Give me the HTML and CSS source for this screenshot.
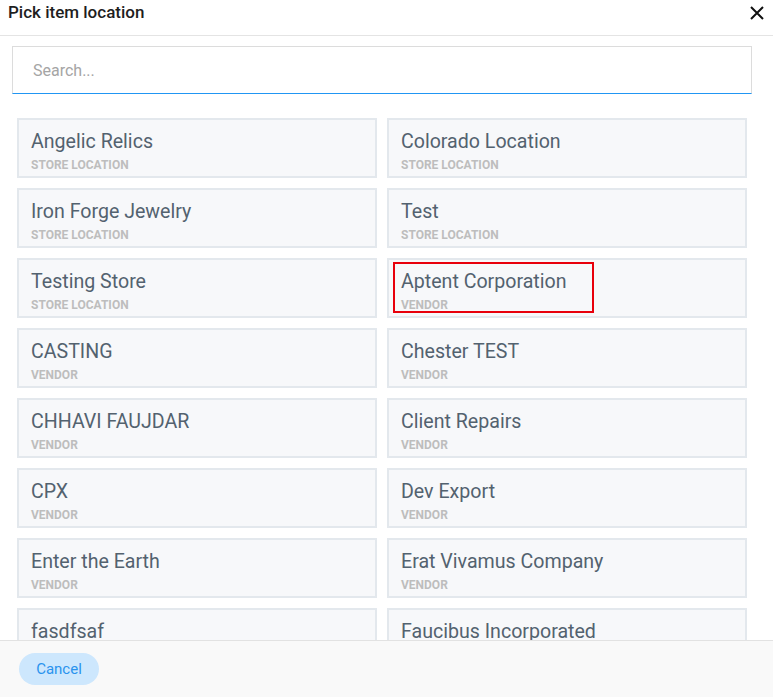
FILE: index.html
```html
<!DOCTYPE html>
<html lang="en">
<head>
    <meta charset="UTF-8">
    <meta name="viewport" content="width=device-width, initial-scale=1.0">
    <title>Pick item location</title>
    <link rel="stylesheet" href="styles.css">
</head>
<body>
<div class="dialog">
    <div class="dialog-header">
        <h2>Pick item location</h2>
        <button class="close" title="Close">
            <svg width="14" height="14" viewBox="0 0 14 14"><path d="M1 1L13 13M13 1L1 13" stroke="#111" stroke-width="2" fill="none"/></svg>
        </button>
    </div>
    <div class="search-wrap">
        <input class="search" type="text" placeholder="Search..." autofocus>
    </div>
    <div class="locations">
        <div class="loc"><div class="name">Angelic Relics</div><div class="kind">Store location</div></div>
        <div class="loc"><div class="name">Colorado Location</div><div class="kind">Store location</div></div>
        <div class="loc"><div class="name">Iron Forge Jewelry</div><div class="kind">Store location</div></div>
        <div class="loc"><div class="name">Test</div><div class="kind">Store location</div></div>
        <div class="loc"><div class="name">Testing Store</div><div class="kind">Store location</div></div>
        <div class="loc marked"><div class="name">Aptent Corporation</div><div class="kind">Vendor</div><span class="mark"></span></div>
        <div class="loc"><div class="name">CASTING</div><div class="kind">Vendor</div></div>
        <div class="loc"><div class="name">Chester TEST</div><div class="kind">Vendor</div></div>
        <div class="loc"><div class="name">CHHAVI FAUJDAR</div><div class="kind">Vendor</div></div>
        <div class="loc"><div class="name">Client Repairs</div><div class="kind">Vendor</div></div>
        <div class="loc"><div class="name">CPX</div><div class="kind">Vendor</div></div>
        <div class="loc"><div class="name">Dev Export</div><div class="kind">Vendor</div></div>
        <div class="loc"><div class="name">Enter the Earth</div><div class="kind">Vendor</div></div>
        <div class="loc"><div class="name">Erat Vivamus Company</div><div class="kind">Vendor</div></div>
        <div class="loc"><div class="name">fasdfsaf</div><div class="kind">Vendor</div></div>
        <div class="loc"><div class="name">Faucibus Incorporated</div><div class="kind">Vendor</div></div>
    </div>
    <div class="dialog-footer">
        <button class="cancel">Cancel</button>
    </div>
</div>
</body>
</html>
```
FILE: styles.css
```css
html, body {
    margin: 0;
    height: 100%;
    background: #fff;
    font-family: Roboto, 'Liberation Sans', sans-serif;
}

.dialog {
    display: flex;
    flex-direction: column;
    height: 100vh;
}

.dialog-header {
    display: flex;
    align-items: center;
    justify-content: space-between;
    height: 35px;
    padding: 0 9px 0 8px;
    border-bottom: 1px solid #e4e4e4;
    flex-shrink: 0;
}
.dialog-header h2 {
    margin: 0 0 11px;
    font-size: 17px;
    font-weight: 500;
    color: #1e1e1e;
}
.close {
    background: none;
    border: none;
    padding: 0;
    margin-bottom: 10px;
    cursor: pointer;
    display: flex;
}

.search-wrap {
    padding: 10px 21px 0 12px;
    flex-shrink: 0;
}
.search {
    box-sizing: border-box;
    width: 100%;
    height: 48px;
    border: 1px solid #dcdcdc;
    border-bottom: 1px solid #2196f3;
    padding: 0 20px;
    font-family: inherit;
    font-size: 16px;
    color: #333;
    outline: none;
}
.search::placeholder {
    color: #a5a5a5;
}

.locations {
    flex: 1;
    overflow: hidden;
    display: grid;
    grid-template-columns: 360px 360px;
    grid-auto-rows: 60px;
    column-gap: 10px;
    row-gap: 10px;
    align-content: start;
    padding: 24px 0 0 17px;
}
.loc {
    position: relative;
    box-sizing: border-box;
    border: 2px solid #e3e8ed;
    background: #f7f8fa;
    padding: 11px 12px 0;
    cursor: pointer;
}
.loc .name {
    font-size: 19.6px;
    line-height: 22px;
    color: #53626f;
}
.loc .kind {
    margin-top: 5px;
    font-size: 12px;
    line-height: 14px;
    font-weight: 700;
    text-transform: uppercase;
    color: #bdbdbd;
}
.mark {
    position: absolute;
    left: 4px;
    top: 2px;
    width: 201px;
    height: 51px;
    box-sizing: border-box;
    border: 2px solid #e8000b;
}

.dialog-footer {
    flex-shrink: 0;
    border-top: 1px solid #e2e2e2;
    background: #f9f9f9;
    padding: 12px 0 0 19px;
    box-sizing: border-box;
    height: 57px;
}
.cancel {
    width: 80px;
    height: 32px;
    border: none;
    border-radius: 16px;
    background: #cde7fd;
    color: #2a93ee;
    font-family: inherit;
    font-size: 15px;
    line-height: 18px;
    cursor: pointer;
}
```
